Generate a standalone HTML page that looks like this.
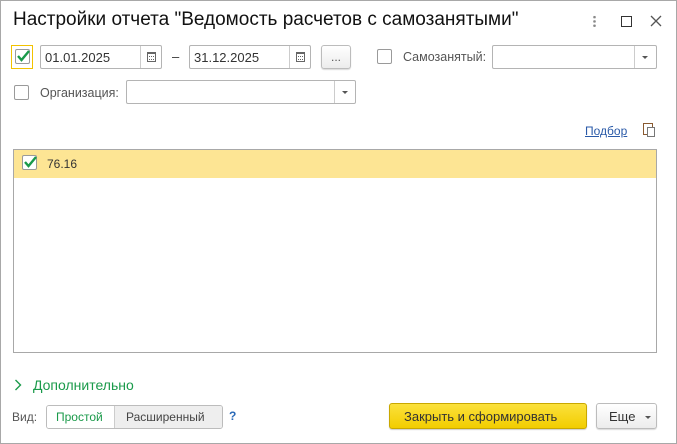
<!DOCTYPE html>
<html><head><meta charset="utf-8"><style>
*{box-sizing:border-box;margin:0;padding:0}
body{width:677px;height:444px;overflow:hidden;background:#fff;font-family:"Liberation Sans",Arial,sans-serif;font-size:12px;color:#444;position:relative}
.win{position:absolute;left:0;top:0;width:677px;height:444px;border:1px solid #a8a8a8}
.a{position:absolute;white-space:nowrap}
.fld{position:absolute;border:1px solid #b4b4b4;border-radius:2px;background:#fff;height:24px}
.cb{position:absolute;width:15px;height:15px;border:1px solid #9a9a9a;border-radius:2px;background:#fff}
.btn{position:absolute;border:1px solid #bcbcbc;border-radius:3px;background:linear-gradient(#fff,#ececec);box-shadow:0 1px 1px rgba(0,0,0,.15)}
.tri{position:absolute;width:0;height:0;border-left:3px solid transparent;border-right:3px solid transparent;border-top:3px solid #555}
.cal{position:absolute;left:106px;top:6px;width:9px;height:10px;border:1px solid #666;border-top-width:2px;background:repeating-linear-gradient(90deg,#666 0 1px,transparent 1px 2px) 1px 2px/5px 1px no-repeat,repeating-linear-gradient(90deg,#666 0 1px,transparent 1px 2px) 1px 5px/5px 1px no-repeat}
</style></head><body><div class="win"></div>
<div class="a" style="left:13px;top:9px;font-size:19px;color:#111">Настройки отчета "Ведомость расчетов с самозанятыми"</div>
<div class="a" style="left:593px;top:15px;width:3px;height:13px;background:radial-gradient(circle,#888 1.2px,transparent 1.4px) 0 0/3px 4.3px"></div>
<div class="a" style="left:621px;top:16px;width:11px;height:11px;border:1.5px solid #333"></div>
<svg class="a" style="left:650px;top:15px" width="12" height="12"><path d="M1 1l10 10M11 1L1 11" stroke="#555" stroke-width="1.3"/></svg>

<div class="a" style="left:11px;top:45px;width:22px;height:24px;border:1px solid #f2c200"></div>
<div class="cb" style="left:15px;top:49px"></div>
<svg class="a" style="left:15px;top:48px" width="16" height="16"><path d="M3 8l3.5 4L14 3" stroke="#1a9a4a" stroke-width="2.4" fill="none"/></svg>
<div class="fld" style="left:40px;top:45px;width:122px"><span class="a" style="left:4px;top:4px;font-size:13px;color:#333">01.01.2025</span><div class="a" style="left:99px;top:0;height:22px;border-left:1px solid #ccc;width:22px"></div><div class="cal"></div></div>
<div class="a" style="left:172px;top:49px;font-size:13px;color:#333">–</div>
<div class="fld" style="left:189px;top:45px;width:122px"><span class="a" style="left:4px;top:4px;font-size:13px;color:#333">31.12.2025</span><div class="a" style="left:99px;top:0;height:22px;border-left:1px solid #ccc;width:22px"></div><div class="cal"></div></div>
<div class="btn" style="left:321px;top:45px;width:30px;height:24px"><span class="a" style="left:9px;top:4px;color:#555">...</span></div>
<div class="cb" style="left:377px;top:49px"></div>
<div class="a" style="left:403px;top:50px;color:#555;font-size:12.5px">Самозанятый:</div>
<div class="fld" style="left:492px;top:45px;width:165px"><div class="a" style="left:141px;top:0;height:22px;border-left:1px solid #ccc"></div><div class="tri" style="left:149px;top:10px"></div></div>

<div class="cb" style="left:14px;top:85px"></div>
<div class="a" style="left:40px;top:86px;color:#555;font-size:12.5px">Организация:</div>
<div class="fld" style="left:126px;top:80px;width:230px"><div class="a" style="left:207px;top:0;height:22px;border-left:1px solid #ccc"></div><div class="tri" style="left:215px;top:10px"></div></div>

<div class="a" style="left:585px;top:124px;color:#2a5aa8;text-decoration:underline">Подбор</div>
<div class="a" style="left:643px;top:123px;width:10px;height:12px;border:1.5px solid #8a5a30;background:#fff"></div>
<div class="a" style="left:647px;top:127px;width:8px;height:10px;border:1px solid #777;background:#fff"></div>

<div class="a" style="left:13px;top:149px;width:644px;height:204px;border:1px solid #a8a8a8"></div>
<div class="a" style="left:14px;top:150px;width:642px;height:28px;background:#fde594"></div>
<div class="cb" style="left:22px;top:155px"></div>
<svg class="a" style="left:22px;top:154px" width="16" height="16"><path d="M3 8l3.5 4L14 3" stroke="#1a9a4a" stroke-width="2.4" fill="none"/></svg>
<div class="a" style="left:47px;top:157px;color:#333">76.16</div>

<svg class="a" style="left:14px;top:379px" width="8" height="12"><path d="M1.5 1l5 5-5 5" stroke="#1a9a4a" stroke-width="1.4" fill="none"/></svg>
<div class="a" style="left:33px;top:377px;font-size:14px;color:#1a9a4a">Дополнительно</div>

<div class="a" style="left:12px;top:410px;color:#555">Вид:</div>
<div class="a" style="left:46px;top:405px;width:177px;height:24px;border:1px solid #bcbcbc;border-radius:3px;overflow:hidden">
<div class="a" style="left:0;top:0;width:67px;height:22px;background:#fff;color:#1a9a4a;padding:4px 0 0 9px">Простой</div>
<div class="a" style="left:67px;top:0;width:110px;height:22px;background:#eee;border-left:1px solid #ccc;padding:4px 0 0 11px;color:#444">Расширенный</div></div>
<div class="a" style="left:229px;top:409px;color:#2a6ab8;font-weight:bold">?</div>
<div class="a" style="left:389px;top:403px;width:198px;height:26px;border:1px solid #c9a800;border-radius:3px;background:linear-gradient(#fbe13c,#f2cd00);color:#333;font-size:13px;padding:5px 0 0 14px;box-shadow:0 1px 1px rgba(0,0,0,.2)">Закрыть и сформировать</div>
<div class="btn" style="left:596px;top:403px;width:61px;height:26px"><span class="a" style="left:12px;top:5px;font-size:13px;color:#333">Еще</span><div class="tri" style="left:48px;top:12px"></div></div>
</body></html>
